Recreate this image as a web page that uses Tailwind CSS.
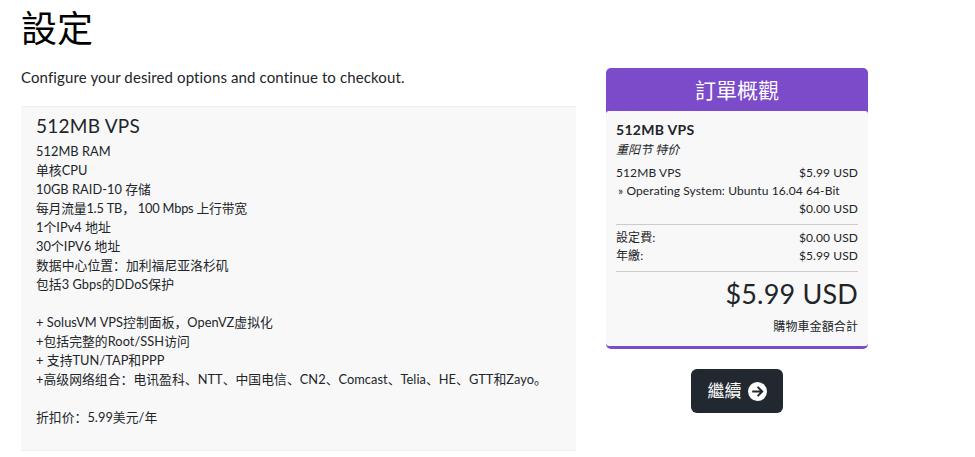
<!DOCTYPE html>
<html lang="zh">
<head>
<meta charset="utf-8">
<script src="https://cdn.jsdelivr.net/npm/@tailwindcss/browser@4"></script>
</head>
<body class="bg-white font-['Lato','Noto_Sans_CJK_SC',sans-serif] text-[#212529] overflow-hidden">
<div class="flex w-[975px] h-[457px] items-start pl-[21px]">
  <main class="w-[555px] shrink-0">
    <h1 class="text-[36px] leading-[43px] text-black mt-[5px] font-['Noto_Sans_CJK_TC',sans-serif]">設定</h1>
    <p class="text-[15px] leading-[21px] mt-[19px] tracking-[0.12px]">Configure your desired options and continue to checkout.</p>
    <section class="mt-[18px] h-[345px] bg-[#f8f8f8] border-y border-[#eeeeee] pl-[15px] pt-[7px]">
      <h2 class="text-[19px] leading-[24px] tracking-[0.25px]">512MB VPS</h2>
      <div class="mt-[4px] text-[12.8px] leading-[19px] tracking-[0.05px]">
        <p>512MB RAM</p>
        <p>单核CPU</p>
        <p>10GB RAID-10 存储</p>
        <p class="tracking-[-0.2px]">每月流量1.5 TB， 100 Mbps 上行带宽</p>
        <p>1个IPv4 地址</p>
        <p>30个IPV6 地址</p>
        <p>数据中心位置：加利福尼亚洛杉矶</p>
        <p>包括3 Gbps的DDoS保护</p>
        <p class="h-[19px]"></p>
        <p>+ SolusVM VPS控制面板，OpenVZ虚拟化</p>
        <p>+包括完整的Root/SSH访问</p>
        <p>+ 支持TUN/TAP和PPP</p>
        <p>+高级网络组合：电讯盈科、NTT、中国电信、CN2、Comcast、Telia、HE、GTT和Zayo。</p>
        <p class="h-[19px]"></p>
        <p>折扣价：5.99美元/年</p>
      </div>
    </section>
  </main>
  <aside class="ml-[30px] w-[262px] mt-[68px]">
    <div class="rounded-[5px] bg-[#7b4bc9] overflow-hidden">
      <div class="h-[43px] text-white text-center text-[21px] leading-[43px] font-['Noto_Sans_CJK_TC',sans-serif]">訂單概觀</div>
      <div class="bg-[#f8f8f8] rounded-[3px] mb-[3px] px-[10px] pt-[9px] text-[12px] leading-[18px] tracking-[0.1px]">
        <div class="font-bold text-[14px] leading-[19px] tracking-[0.3px]">512MB VPS</div>
        <div class="italic leading-[19px] mt-px">重阳节 特价</div>
        <div class="flex justify-between mt-[5px]"><span>512MB VPS</span><span>$5.99 USD</span></div>
        <div class="pl-[2px]">» Operating System: Ubuntu 16.04 64-Bit</div>
        <div class="text-right">$0.00 USD</div>
        <div class="border-t border-[#cccccc] mt-[6px] pt-[4px]">
          <div class="flex justify-between"><span>設定費:</span><span>$0.00 USD</span></div>
          <div class="flex justify-between"><span>年繳:</span><span>$5.99 USD</span></div>
        </div>
        <div class="border-t border-[#cccccc] mt-[6px] text-right">
          <div class="text-[27px] leading-[44px] tracking-[0.18px]">$5.99 USD</div>
          <div class="mt-[1px] pb-[10px] leading-[19px]">購物車金額合計</div>
        </div>
      </div>
    </div>
    <div class="flex justify-center mt-[20px]">
      <a class="flex items-center gap-[6px] h-[44px] w-[92px] justify-center rounded-[6px] bg-[#212830] text-white text-[17px]">
        <span>繼續</span>
        <svg width="19" height="19" viewBox="0 0 19 19" aria-hidden="true"><circle cx="9.5" cy="9.5" r="9.5" fill="#fff"/><path d="M4.2 9.5h9.6M9.6 4.9l4.6 4.6-4.6 4.6" fill="none" stroke="#212830" stroke-width="2"/></svg>
      </a>
    </div>
  </aside>
</div>
</body>
</html>
